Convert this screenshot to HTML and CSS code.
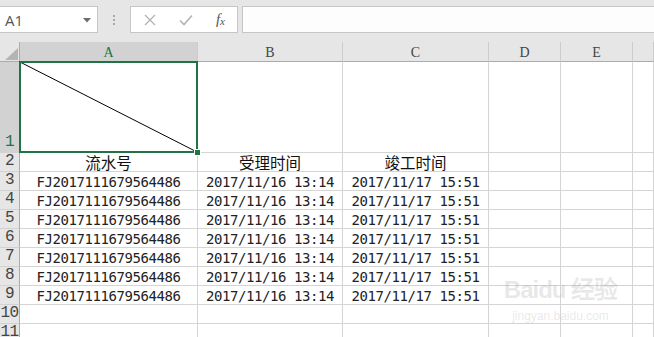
FILE: index.html
```html
<!DOCTYPE html>
<html lang="zh-CN">
<head>
  <meta charset="UTF-8">
  <title>Sheet1</title>
  <link rel="stylesheet" href="styles.css">
</head>
<body>
  <div class="toolbar">
    <div class="namebox">
      <span>A1</span>
      <svg class="caret" width="8" height="5" viewBox="0 0 8 5"><polygon points="0,0 8,0 4,4.5" fill="#6d6d6d"/></svg>
    </div>
    <div class="dots"><i></i><i></i><i></i></div>
    <div class="fxbox">
      <svg width="12" height="12" viewBox="0 0 12 12"><path d="M1 1 L11 11 M11 1 L1 11" stroke="#b3b3b3" stroke-width="1.3" fill="none"/></svg>
      <svg width="14" height="12" viewBox="0 0 14 12"><path d="M1 6.5 L5 10.5 L13 1.5" stroke="#b3b3b3" stroke-width="1.6" fill="none"/></svg>
      <span class="fx">f<sub>x</sub></span>
    </div>
    <div class="formula"></div>
  </div>

  <div class="sheet">
    <div class="corner"><svg width="20" height="20" viewBox="0 0 20 20"><polygon points="18,6 18,18 5,18" fill="#b4b4b4"/></svg></div>
    <div class="colhead sel">A</div>
    <div class="colhead">B</div>
    <div class="colhead">C</div>
    <div class="colhead">D</div>
    <div class="colhead">E</div>
    <div class="colhead"></div>

    <div class="rowhead sel">1</div>
    <div class="cell a1">
      <svg class="diag" viewBox="0 0 100 100" preserveAspectRatio="none"><line x1="0" y1="0" x2="100" y2="100" stroke="#000" stroke-width="1" vector-effect="non-scaling-stroke"/></svg>
    </div>
    <div class="cell"></div><div class="cell"></div><div class="cell"></div><div class="cell"></div><div class="cell"></div>

    <div class="rowhead">2</div>
    <div class="cell cjk">流水号</div><div class="cell cjk">受理时间</div><div class="cell cjk">竣工时间</div>
    <div class="cell"></div><div class="cell"></div><div class="cell"></div>

    <div class="rowhead">3</div>
    <div class="cell">FJ2017111679564486</div><div class="cell">2017/11/16 13:14</div><div class="cell">2017/11/17 15:51</div>
    <div class="cell"></div><div class="cell"></div><div class="cell"></div>

    <div class="rowhead">4</div>
    <div class="cell">FJ2017111679564486</div><div class="cell">2017/11/16 13:14</div><div class="cell">2017/11/17 15:51</div>
    <div class="cell"></div><div class="cell"></div><div class="cell"></div>

    <div class="rowhead">5</div>
    <div class="cell">FJ2017111679564486</div><div class="cell">2017/11/16 13:14</div><div class="cell">2017/11/17 15:51</div>
    <div class="cell"></div><div class="cell"></div><div class="cell"></div>

    <div class="rowhead">6</div>
    <div class="cell">FJ2017111679564486</div><div class="cell">2017/11/16 13:14</div><div class="cell">2017/11/17 15:51</div>
    <div class="cell"></div><div class="cell"></div><div class="cell"></div>

    <div class="rowhead">7</div>
    <div class="cell">FJ2017111679564486</div><div class="cell">2017/11/16 13:14</div><div class="cell">2017/11/17 15:51</div>
    <div class="cell"></div><div class="cell"></div><div class="cell"></div>

    <div class="rowhead">8</div>
    <div class="cell">FJ2017111679564486</div><div class="cell">2017/11/16 13:14</div><div class="cell">2017/11/17 15:51</div>
    <div class="cell"></div><div class="cell"></div><div class="cell"></div>

    <div class="rowhead">9</div>
    <div class="cell">FJ2017111679564486</div><div class="cell">2017/11/16 13:14</div><div class="cell">2017/11/17 15:51</div>
    <div class="cell"></div><div class="cell"></div><div class="cell"></div>

    <div class="rowhead">10</div>
    <div class="cell"></div><div class="cell"></div><div class="cell"></div>
    <div class="cell"></div><div class="cell"></div><div class="cell"></div>

    <div class="rowhead">11</div>
    <div class="cell"></div><div class="cell"></div><div class="cell"></div>
    <div class="cell"></div><div class="cell"></div><div class="cell"></div>

    <div class="watermark">
      <div class="wm-logo">Bai<span class="paw">du</span> 经验</div>
      <div class="wm-url">jingyan.baidu.com</div>
    </div>
  </div>
</body>
</html>
```

FILE: styles.css
```css
body {
  margin: 0;
  background: #fff;
  font-family: "DejaVu Sans Mono", "Noto Sans CJK SC", monospace;
  overflow: hidden;
}
.toolbar {
  display: flex;
  align-items: flex-start;
  height: 42px;
  padding-top: 6px;
  box-sizing: border-box;
  background: #e6e6e6;
}
.namebox {
  width: 98px;
  height: 27px;
  box-sizing: border-box;
  border: 1px solid #c6c6c6;
  border-left: none;
  background: #fff;
  display: flex;
  align-items: center;
  justify-content: space-between;
  padding: 0 6px 0 5px;
  font-family: "Open Sans", "Liberation Sans", sans-serif;
  font-size: 15px;
  color: #555;
}
.caret {
  margin-top: 1px;
}
.dots {
  width: 32px;
  height: 27px;
  display: flex;
  flex-direction: column;
  align-items: center;
  justify-content: center;
  gap: 2px;
}
.dots i {
  width: 2px;
  height: 2px;
  background: #a8a8a8;
}
.fxbox {
  width: 108px;
  height: 27px;
  box-sizing: border-box;
  border: 1px solid #c6c6c6;
  background: #fff;
  display: flex;
  align-items: center;
  justify-content: space-between;
  padding: 0 12px 0 13px;
}
.fx {
  font-family: "Liberation Serif", serif;
  font-style: italic;
  font-size: 15px;
  color: #555;
  line-height: 1;
}
.fx sub {
  font-size: 11px;
  vertical-align: -1px;
}
.formula {
  flex: 1;
  height: 27px;
  margin-left: 4px;
  margin-right: -2px;
  box-sizing: border-box;
  border: 1px solid #c6c6c6;
  background: #fdfdfd;
}

.sheet {
  position: relative;
  display: grid;
  grid-template-columns: 20px 178px 145px 146px 72px 72px 1fr;
  grid-template-rows: 20px 91px repeat(10, 19px);
}
.sheet > div {
  box-sizing: border-box;
}
.corner {
  background: #e6e6e6;
  border-right: 1px solid #ababab;
  border-bottom: 1px solid #ababab;
}
.corner svg {
  display: block;
}
.colhead {
  background: #e6e6e6;
  border-right: 1px solid #cdcdcd;
  border-bottom: 1px solid #ababab;
  font-family: "Liberation Serif", serif;
  font-size: 14px;
  color: #444;
  text-align: center;
  line-height: 21px;
}
.rowhead {
  background: #e6e6e6;
  border-right: 1px solid #ababab;
  border-bottom: 1px solid #d2d2d2;
  font-family: "Liberation Mono", monospace;
  font-size: 16px;
  letter-spacing: -0.5px;
  color: #444;
  display: flex;
  align-items: flex-end;
  justify-content: center;
  line-height: 19px;
}
.colhead.sel, .rowhead.sel {
  background: #d2d2d2;
  color: #217346;
}
.cell {
  border-right: 1px solid #d4d4d4;
  border-bottom: 1px solid #d4d4d4;
  font-size: 14px;
  letter-spacing: -0.43px;
  color: #222;
  text-align: center;
  line-height: 19px;
  padding-top: 1px;
  white-space: nowrap;
}
.cell.cjk {
  font-family: "Noto Sans CJK SC", sans-serif;
  font-size: 15.5px;
  letter-spacing: 0;
  padding-top: 0;
  color: #111;
}
.a1 {
  position: relative;
}
.diag {
  position: absolute;
  left: 0;
  top: 0;
  width: 100%;
  height: 100%;
}
.a1::after {
  content: "";
  position: absolute;
  left: -1px;
  top: -1px;
  right: -1px;
  bottom: -1px;
  border: 2px solid #217346;
}
.a1::before {
  content: "";
  position: absolute;
  right: -4px;
  bottom: -4px;
  width: 5px;
  height: 5px;
  background: #217346;
  border: 1px solid #fff;
  z-index: 2;
}

.watermark {
  position: absolute;
  left: 498px;
  top: 228px;
  width: 125px;
  text-align: center;
  font-family: "Liberation Sans", sans-serif;
  color: rgba(150, 150, 150, 0.22);
  pointer-events: none;
}
.wm-logo {
  font-size: 24px;
  font-weight: bold;
  letter-spacing: -1px;
  white-space: nowrap;
}
.wm-url {
  font-size: 12px;
  margin-top: 4px;
}
```
